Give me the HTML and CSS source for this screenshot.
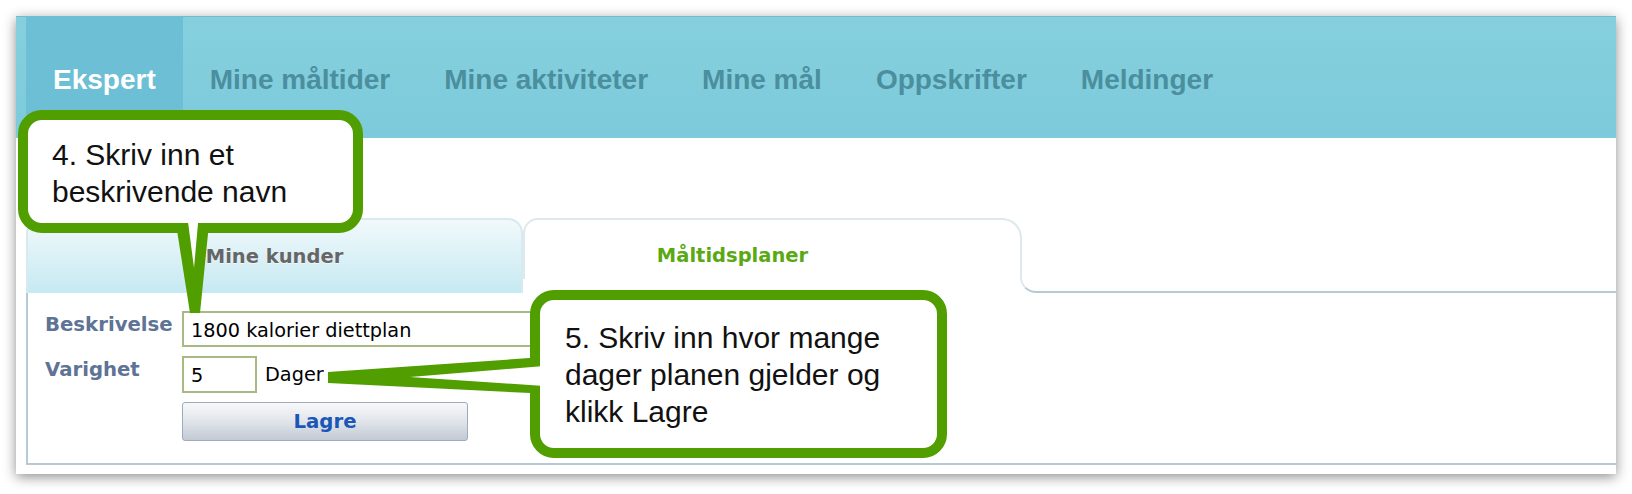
FILE: index.html
```html
<!DOCTYPE html>
<html lang="no">
<head>
<meta charset="utf-8">
<title>Måltidsplaner</title>
<link rel="stylesheet" href="styles.css">
</head>
<body>
<div class="window">
  <header class="topbar">
    <nav class="topnav">
      <a class="nav-item is-active">Ekspert</a>
      <a class="nav-item">Mine måltider</a>
      <a class="nav-item">Mine aktiviteter</a>
      <a class="nav-item">Mine mål</a>
      <a class="nav-item">Oppskrifter</a>
      <a class="nav-item">Meldinger</a>
    </nav>
  </header>
  <main class="main">
    <div class="tabs">
      <div class="tab tab-idle">Mine kunder</div>
      <div class="tab tab-current">Måltidsplaner</div>
      <div class="tabs-rest"></div>
    </div>
    <section class="panel">
      <div class="form">
        <label class="form-label">Beskrivelse</label>
        <div class="form-field"><input class="text-input text-input-wide" type="text" value="1800 kalorier diettplan"></div>
        <label class="form-label">Varighet</label>
        <div class="form-field"><input class="text-input text-input-short" type="text" value="5"><span class="unit">Dager</span></div>
        <div class="form-spacer"></div>
        <div class="form-field"><button class="btn" type="button">Lagre</button></div>
      </div>
    </section>
  </main>

  <div class="callout callout-name">4. Skriv inn et<br>beskrivende navn</div>
  <div class="callout callout-days">5. Skriv inn hvor mange<br>dager planen gjelder og<br>klikk Lagre</div>

  <svg class="pointers" width="1600" height="458" viewBox="0 0 1600 458">
    <polygon class="ptr-green" points="160,208 193,208 184,297 174,297"/>
    <polygon class="ptr-white" points="171.5,202 182.5,202 178,252"/>
    <polygon class="ptr-green" points="312,356 520,341.6 520,377.3 312,367"/>
    <polygon class="ptr-white" points="528,350 528,370 394,361"/>
  </svg>
</div>
</body>
</html>
```
FILE: styles.css
```css
html, body {
  margin: 0;
  padding: 0;
  background: #ffffff;
}

.window {
  position: relative;
  width: 1600px;
  height: 458px;
  margin: 16px;
  background: #ffffff;
  box-shadow: 0 3px 12px rgba(0, 0, 0, 0.45);
}

/* top navigation */
.topbar {
  height: 122px;
  padding-left: 10px;
  background: linear-gradient(#86d0de, #7ccadb);
  box-shadow: inset 0 1px 0 #72bccb;
}

.topnav {
  display: flex;
  height: 100%;
}

.nav-item {
  display: block;
  box-sizing: border-box;
  height: 100%;
  padding: 50px 27px 0;
  font-family: "Liberation Sans", Arial, sans-serif;
  font-weight: bold;
  font-size: 28px;
  line-height: 28px;
  color: #4b8e9d;
  white-space: nowrap;
}

.nav-item.is-active {
  background: #6cbfd4;
  color: #ffffff;
}

/* main area */
.main {
  padding: 80px 0 9px 10px;
}

.tabs {
  display: flex;
  height: 75px;
}

.tab {
  box-sizing: border-box;
  display: flex;
  align-items: center;
  justify-content: center;
  font-family: "DejaVu Sans", Verdana, sans-serif;
  font-weight: bold;
  font-size: 19.5px;
  white-space: nowrap;
}

.tab-idle {
  width: 497px;
  border: 2px solid #d6eaf0;
  border-bottom: 0;
  border-radius: 15px 15px 0 0;
  background: linear-gradient(#f1f9fb, #c6e9f2);
  color: #666666;
  text-shadow: 0 1px 0 rgba(255, 255, 255, 0.6);
}

.tab-current {
  align-self: flex-start;
  width: 499px;
  height: 61px;
  padding: 12px 80px 0 0;
  border: 2px solid #dde9ec;
  border-bottom: 0;
  border-radius: 15px 20px 0 0;
  background: #ffffff;
  color: #5aa914;
}

.tabs-rest {
  align-self: flex-end;
  flex: 1;
  box-sizing: border-box;
  height: 17px;
  margin-left: -2px;
  border-left: 2px solid #dde9ec;
  border-bottom: 2px solid #b8c9d6;
  border-bottom-left-radius: 16px;
}

/* form panel */
.panel {
  padding: 18px 0 22px 17px;
  border-left: 2px solid #b8c9d6;
  border-bottom: 2px solid #b8c9d6;
}

.form {
  display: grid;
  grid-template-columns: 137px 1fr;
  row-gap: 9px;
}

.form-label {
  padding-top: 2px;
  font-family: "DejaVu Sans", Verdana, sans-serif;
  font-weight: bold;
  font-size: 19.7px;
  line-height: 24px;
  color: #5e7396;
}

.form-field {
  display: flex;
  align-items: center;
}

.text-input {
  box-sizing: border-box;
  margin: 0;
  padding: 2px 7px 0;
  border: 2px solid #a8ba84;
  border-radius: 0;
  background: #ffffff;
  font-family: "DejaVu Sans", Verdana, sans-serif;
  font-size: 19.3px;
  color: #000000;
  outline: none;
}

.text-input-wide {
  width: 620px;
  height: 36px;
}

.text-input-short {
  width: 75px;
  height: 37px;
}

.unit {
  margin-left: 8px;
  font-family: "DejaVu Sans", Verdana, sans-serif;
  font-size: 19.3px;
  color: #000000;
}

.btn {
  box-sizing: border-box;
  width: 286px;
  height: 39px;
  margin: 0;
  padding: 0;
  border: 1px solid #9eabbb;
  border-radius: 3px;
  background: linear-gradient(#f7f8fa, #e3e7ec 45%, #c3cad5);
  font-family: "DejaVu Sans", Verdana, sans-serif;
  font-weight: bold;
  font-size: 19.7px;
  color: #1a56b8;
}

/* callouts */
.callout {
  position: absolute;
  box-sizing: border-box;
  border: 10px solid #509e00;
  border-radius: 24px;
  background: #ffffff;
  font-family: "Liberation Sans", Arial, sans-serif;
  font-size: 30px;
  line-height: 37px;
  color: #111111;
  white-space: nowrap;
}

.callout-name {
  left: 2px;
  top: 94px;
  width: 345px;
  height: 123px;
  padding: 16px 0 0 24px;
}

.callout-days {
  left: 514px;
  top: 274px;
  width: 417px;
  height: 168px;
  padding: 19px 0 0 25px;
}

.pointers {
  position: absolute;
  left: 0;
  top: 0;
  pointer-events: none;
}

.ptr-green {
  fill: #509e00;
}

.ptr-white {
  fill: #ffffff;
}
```
